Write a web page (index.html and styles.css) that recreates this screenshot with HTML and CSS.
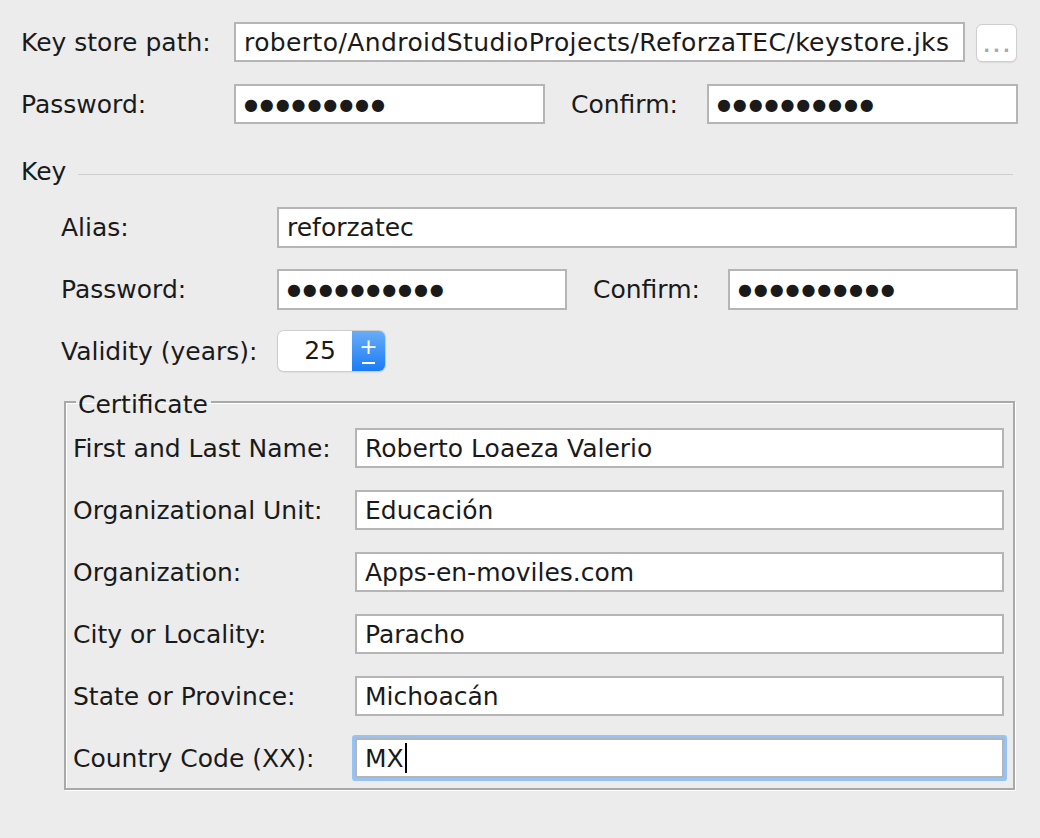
FILE: index.html
```html
<!DOCTYPE html>
<html>
<head>
<meta charset="utf-8">
<link rel="stylesheet" href="styles.css">
</head>
<body>
<div class="page">
  <div class="row r-path">
    <label class="lbl lbl-top">Key store path:</label>
    <div class="field f-path">roberto/AndroidStudioProjects/ReforzaTEC/keystore.jks</div>
    <div class="browse"><span>...</span></div>
  </div>
  <div class="row r-pass">
    <label class="lbl lbl-top">Password:</label>
    <div class="field f-half"><span class="dots">●●●●●●●●●</span></div>
    <label class="lbl lbl-confirm">Confirm:</label>
    <div class="field f-half"><span class="dots">●●●●●●●●●●</span></div>
  </div>

  <div class="sep">
    <span class="sep-title">Key</span>
    <span class="sep-line"></span>
  </div>

  <div class="key">
    <div class="row r-alias">
      <label class="lbl lbl-key">Alias:</label>
      <div class="field kf f-alias">reforzatec</div>
    </div>
    <div class="row r-kpass">
      <label class="lbl lbl-key">Password:</label>
      <div class="field kf f-khalf"><span class="dots">●●●●●●●●●●</span></div>
      <label class="lbl lbl-kconfirm">Confirm:</label>
      <div class="field kf f-khalf"><span class="dots">●●●●●●●●●●</span></div>
    </div>
    <div class="row r-valid">
      <label class="lbl lbl-key">Validity (years):</label>
      <div class="stepper">
        <div class="step-val">25</div>
        <div class="step-btn"><span class="plus">+</span><span class="minus"></span></div>
      </div>
    </div>

    <fieldset class="cert">
      <legend>Certificate</legend>
      <div class="crow">
        <label class="lbl lbl-cert">First and Last Name:</label>
        <div class="field f-cert">Roberto Loaeza Valerio</div>
      </div>
      <div class="crow">
        <label class="lbl lbl-cert">Organizational Unit:</label>
        <div class="field f-cert">Educación</div>
      </div>
      <div class="crow">
        <label class="lbl lbl-cert">Organization:</label>
        <div class="field f-cert">Apps-en-moviles.com</div>
      </div>
      <div class="crow">
        <label class="lbl lbl-cert">City or Locality:</label>
        <div class="field f-cert">Paracho</div>
      </div>
      <div class="crow">
        <label class="lbl lbl-cert">State or Province:</label>
        <div class="field f-cert">Michoacán</div>
      </div>
      <div class="crow">
        <label class="lbl lbl-cert">Country Code (XX):</label>
        <div class="field f-cert focused">MX<span class="caret"></span></div>
      </div>
    </fieldset>
  </div>
</div>
</body>
</html>
```

FILE: styles.css
```css
html, body {
  margin: 0;
  padding: 0;
  background: #ececec;
}
body {
  width: 1040px;
  height: 838px;
  overflow: hidden;
  font-family: "DejaVu Sans", "Noto Sans", sans-serif;
  font-size: 25px;
  color: #1a1a1a;
}
.page {
  padding: 22px 0 0 21px;
}
.row {
  display: flex;
  align-items: center;
}
.lbl {
  flex: none;
  white-space: nowrap;
}
.field {
  box-sizing: border-box;
  height: 40px;
  background: #fff;
  border: 2px solid #b5b5b5;
  padding: 0 8px;
  display: flex;
  align-items: center;
  white-space: nowrap;
  overflow: hidden;
  flex: none;
}
.kf { height: 41px; }
.lbl-top { width: 213px; }
.f-path { width: 731px; letter-spacing: 0.4px; }
.browse {
  box-sizing: border-box;
  width: 41px;
  height: 38px;
  margin-left: 11px;
  margin-top: 2px;
  background: #fff;
  border: 1px solid #cfcfcf;
  border-radius: 6px;
  box-shadow: 0 1px 1px rgba(0,0,0,0.08);
  color: #a8a8a8;
  font-size: 18px;
  font-weight: bold;
  display: flex;
  align-items: flex-end;
  justify-content: center;
  padding-bottom: 5px;
  letter-spacing: 3px;
  padding-left: 3px;
}
.r-pass { margin-top: 22px; }
.f-half { width: 311px; }
.lbl-confirm { width: 136px; padding-left: 26px; }
.dots {
  font-size: 16px;
  letter-spacing: 1.9px;
  color: #1a1a1a;
}

.sep {
  display: flex;
  align-items: center;
  margin-top: 32px;
  height: 30px;
  width: 992px;
}
.sep-title { flex: none; }
.sep-line {
  flex: 1;
  height: 1px;
  background: #cfcfcf;
  margin-left: 12px;
  margin-top: 6px;
}

.key { padding-left: 40px; }
.r-alias { margin-top: 21px; }
.lbl-key { width: 216px; }
.f-alias { width: 740px; }
.r-kpass { margin-top: 21px; }
.f-khalf { width: 290px; }
.lbl-kconfirm { width: 161px; padding-left: 26px; box-sizing: border-box; }
.r-valid { margin-top: 21px; }

.stepper {
  display: flex;
  height: 40px;
  width: 107px;
  margin-left: 1px;
  border-radius: 6px;
  overflow: hidden;
  box-shadow: 0 0 0 1px #cdcdcd, 0 1px 2px rgba(0,0,0,0.15);
}
.step-val {
  box-sizing: border-box;
  width: 74px;
  background: #fff;
  text-align: right;
  padding-right: 16px;
  line-height: 40px;
}
.step-btn {
  flex: 1;
  background: linear-gradient(#68adf8, #1a7cf6);
  display: flex;
  flex-direction: column;
  align-items: center;
  justify-content: center;
  color: #fff;
}
.plus {
  font-size: 22px;
  line-height: 18px;
  font-weight: normal;
}
.minus {
  width: 13px;
  height: 2px;
  background: #fff;
  margin-top: 6px;
}

.cert {
  box-sizing: border-box;
  width: 951px;
  margin: 15px 0 0 3px;
  padding: 10px 9px 10px 7px;
  border: 2px solid #a9a9a9;
  box-shadow: 1px 1px 0 #fff, inset 1px 1px 0 #fff;
}
.cert legend {
  padding: 6px 3px 0 2px;
  margin-left: 3px;
  line-height: 26px;
}
.crow {
  display: flex;
  align-items: center;
  margin-bottom: 22px;
}
.crow:last-child { margin-bottom: 0; }
.lbl-cert { width: 282px; }
.f-cert { width: 649px; }
.focused {
  box-shadow: 0 0 0 3px #97c3f4;
  border-radius: 1px;
}
.caret {
  display: inline-block;
  width: 2px;
  height: 30px;
  background: #000;
  margin-left: 1px;
}
```
